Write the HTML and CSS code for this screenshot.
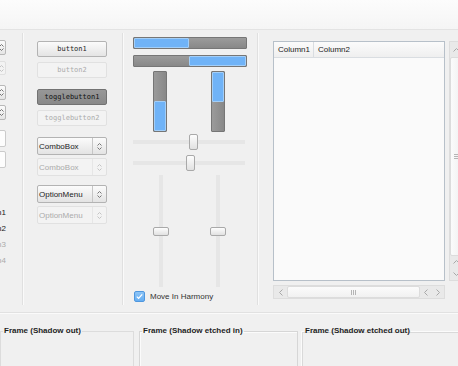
FILE: index.html
```html
<!DOCTYPE html>
<html>
<head>
<meta charset="utf-8">
<link rel="stylesheet" href="styles.css">
</head>
<body>
<div class="topbar"></div>
<div class="main">
  <div class="col col1">
    <div class="c1-inner">
      <div class="c1-spin"><svg class="ud" width="5" height="9" viewBox="0 0 5 9"><polyline points="0.5,3.5 2.5,1.5 4.5,3.5"/><polyline points="0.5,5.5 2.5,7.5 4.5,5.5"/></svg></div>
      <div class="c1-spin dis s2"><svg class="ud" width="5" height="9" viewBox="0 0 5 9"><polyline points="0.5,3.5 2.5,1.5 4.5,3.5"/><polyline points="0.5,5.5 2.5,7.5 4.5,5.5"/></svg></div>
      <div class="c1-spin s3"><svg class="ud" width="5" height="9" viewBox="0 0 5 9"><polyline points="0.5,3.5 2.5,1.5 4.5,3.5"/><polyline points="0.5,5.5 2.5,7.5 4.5,5.5"/></svg></div>
      <div class="c1-spin s4"><svg class="ud" width="5" height="9" viewBox="0 0 5 9"><polyline points="0.5,3.5 2.5,1.5 4.5,3.5"/><polyline points="0.5,5.5 2.5,7.5 4.5,5.5"/></svg></div>
      <div class="c1-entry e1"></div>
      <div class="c1-entry e2"></div>
      <div class="c1-labels">
        <div class="rl">radiobutton1</div>
        <div class="rl">radiobutton2</div>
        <div class="rl dis">radiobutton3</div>
        <div class="rl dis">radiobutton4</div>
      </div>
    </div>
  </div>

  <div class="col col2">
    <div class="btn">button1</div>
    <div class="btn dis g5">button2</div>
    <div class="btn tog g11">togglebutton1</div>
    <div class="btn dis g5">togglebutton2</div>
    <div class="combo g11"><div class="ctxt">ComboBox</div><div class="carr"><svg class="ud" width="5" height="9" viewBox="0 0 5 9"><polyline points="0.5,3.5 2.5,1.5 4.5,3.5"/><polyline points="0.5,5.5 2.5,7.5 4.5,5.5"/></svg></div></div>
    <div class="combo dis g3"><div class="ctxt">ComboBox</div><div class="carr"><svg class="ud" width="5" height="9" viewBox="0 0 5 9"><polyline points="0.5,3.5 2.5,1.5 4.5,3.5"/><polyline points="0.5,5.5 2.5,7.5 4.5,5.5"/></svg></div></div>
    <div class="combo g9"><div class="ctxt">OptionMenu</div><div class="carr"><svg class="ud" width="5" height="9" viewBox="0 0 5 9"><polyline points="0.5,3.5 2.5,1.5 4.5,3.5"/><polyline points="0.5,5.5 2.5,7.5 4.5,5.5"/></svg></div></div>
    <div class="combo dis g3"><div class="ctxt">OptionMenu</div><div class="carr"><svg class="ud" width="5" height="9" viewBox="0 0 5 9"><polyline points="0.5,3.5 2.5,1.5 4.5,3.5"/><polyline points="0.5,5.5 2.5,7.5 4.5,5.5"/></svg></div></div>
  </div>

  <div class="col col3">
    <div class="hprog"><div class="hfill" style="width:55px"></div></div>
    <div class="hprog right g6"><div class="hfill" style="width:57px"></div></div>
    <div class="vprogs">
      <div class="vprog bottom"><div class="vfill" style="height:30px"></div></div>
      <div class="vprog"><div class="vfill" style="height:30px"></div></div>
    </div>
    <div class="hscale s1"><div class="hthumb" style="margin-left:56px"></div></div>
    <div class="hscale s2"><div class="hthumb" style="margin-left:53px"></div></div>
    <div class="vscales">
      <div class="vscale"><div class="vthumb" style="margin-top:52px"></div></div>
      <div class="vscale"><div class="vthumb" style="margin-top:52px"></div></div>
    </div>
    <div class="check">
      <span class="cbox"><svg width="9" height="9" viewBox="0 0 9 9"><polyline points="1.8,4.6 3.6,6.4 7.2,2.4"/></svg></span>
      <span class="clabel">Move In Harmony</span>
    </div>
  </div>

  <div class="col col4">
    <div class="treewrap">
      <div class="tree">
        <div class="thead">
          <div class="th c1">Column1</div>
          <div class="th c2">Column2</div>
        </div>
      </div>
      <div class="hscroll">
        <div class="hbtn"><svg class="chev" width="4" height="7" viewBox="0 0 4 7"><polyline points="3.5,0.5 0.5,3.5 3.5,6.5"/></svg></div>
        <div class="hslider"><span class="grip-v"></span><span class="grip-v"></span><span class="grip-v"></span></div>
        <div class="hbtns">
          <svg class="chev" width="4" height="7" viewBox="0 0 4 7"><polyline points="3.5,0.5 0.5,3.5 3.5,6.5"/></svg>
          <svg class="chev" width="4" height="7" viewBox="0 0 4 7"><polyline points="0.5,0.5 3.5,3.5 0.5,6.5"/></svg>
        </div>
      </div>
    </div>
    <div class="vscroll">
      <div class="vbtn"><svg class="chev" width="7" height="4" viewBox="0 0 7 4"><polyline points="0.5,3.5 3.5,0.5 6.5,3.5"/></svg></div>
      <div class="vslider"><span class="grip-h"></span><span class="grip-h"></span><span class="grip-h"></span></div>
      <div class="vbtns">
        <svg class="chev" width="7" height="4" viewBox="0 0 7 4"><polyline points="0.5,3.5 3.5,0.5 6.5,3.5"/></svg>
        <svg class="chev" width="7" height="4" viewBox="0 0 7 4"><polyline points="0.5,0.5 3.5,3.5 6.5,0.5"/></svg>
      </div>
    </div>
  </div>
</div>
<div class="hsep"></div>
<div class="frames">
  <fieldset class="frame f1"><legend>Frame (Shadow out)</legend></fieldset>
  <fieldset class="frame f2 etched-in"><legend>Frame (Shadow etched in)</legend></fieldset>
  <fieldset class="frame f3 etched-out"><legend>Frame (Shadow etched out)</legend></fieldset>
</div>
</body>
</html>
```
FILE: styles.css
```css
* { box-sizing: border-box; }
html, body { margin: 0; padding: 0; }
body {
  width: 458px;
  height: 366px;
  overflow: hidden;
  background: #f0f0f0;
  font-family: "Liberation Sans", Arial, sans-serif;
  font-size: 8px;
  color: #222;
}

.topbar {
  height: 30px;
  background: linear-gradient(#fcfcfc, #f5f5f5);
  border-bottom: 1px solid #e3e3e3;
}

.main {
  display: flex;
  height: 275px;
  padding-top: 3px;
}
.col {
  flex: none;
  height: 272px;
  border-right: 1px solid #e0e0e0;
  box-shadow: 1px 0 0 #fafafa;
}
.col1 { width: 23px; overflow: hidden; }
.col2 { width: 100px; padding: 8px 0 0 14px; }
.col3 { width: 135px; padding: 4px 0 0 10px; }
.col4 { flex: 1; border-right: none; box-shadow: none; padding: 8px 0 0 15px; display: flex; gap: 4px; overflow: hidden; }

/* icons */
.ud polyline, .chev polyline {
  fill: none;
  stroke: #777;
  stroke-width: 1;
}
.dis .ud polyline { stroke: #c4c4c4; }
.chev polyline { stroke: #a8a8a8; }

/* column 1 (mostly scrolled out of view on the left) */
.c1-inner {
  width: 60px;
  margin-left: -54px;
  padding-top: 7px;
  display: flex;
  flex-direction: column;
}
.c1-spin {
  height: 15px;
  border: 1px solid #b8b8b8;
  border-radius: 2px;
  background: linear-gradient(#fbfbfb, #e5e5e5);
  display: flex;
  justify-content: flex-end;
  align-items: center;
  padding-right: 1px;
}
.c1-spin.dis { background: #f3f3f3; border-color: #e0e0e0; }
.c1-spin.s2 { margin-top: 6px; height: 14px; }
.c1-spin.s3 { margin-top: 10px; }
.c1-spin.s4 { margin-top: 5px; }
.c1-entry {
  height: 17px;
  border: 1px solid #cbcbcb;
  border-radius: 2px;
  background: #fdfdfd;
}
.c1-entry.e1 { margin-top: 10px; }
.c1-entry.e2 { margin-top: 4px; }
.c1-labels { margin-top: 37px; }
.rl {
  height: 16px;
  line-height: 16px;
  text-align: right;
  white-space: nowrap;
  color: #222;
}
.rl.dis { color: #ababab; }

/* column 2 */
.g3 { margin-top: 3px; }
.g5 { margin-top: 5px; }
.g6 { margin-top: 6px; }
.g9 { margin-top: 9px; }
.g11 { margin-top: 11px; }

.btn {
  width: 70px;
  height: 16px;
  border: 1px solid #b3b3b3;
  border-radius: 2px;
  background: linear-gradient(#fbfbfb, #e4e4e4);
  font-family: "DejaVu Sans Mono", "Liberation Mono", monospace;
  font-size: 7px;
  color: #262626;
  display: flex;
  align-items: center;
  justify-content: center;
}
.btn.dis {
  background: #f3f3f3;
  border-color: #e1e1e1;
  color: #ababab;
}
.btn.tog {
  background: linear-gradient(#979797, #898989);
  border-color: #727272;
  color: #111;
}

.combo {
  width: 70px;
  height: 18px;
  display: flex;
  border: 1px solid #b3b3b3;
  border-radius: 2px;
  background: linear-gradient(#fbfbfb, #e3e3e3);
}
.ctxt {
  flex: 1;
  padding-left: 1px;
  display: flex;
  align-items: center;
  border-right: 1px solid #c6c6c6;
  color: #1c1c1c;
}
.carr {
  width: 13px;
  display: flex;
  align-items: center;
  justify-content: center;
}
.combo.dis {
  background: #f3f3f3;
  border-color: #e1e1e1;
}
.combo.dis .ctxt { color: #ababab; border-right-color: #e6e6e6; }

/* column 3 */
.hprog {
  width: 114px;
  height: 12px;
  border: 1px solid #767676;
  border-radius: 1px;
  background: linear-gradient(#9b9b9b, #888888);
  display: flex;
}
.hprog.right { justify-content: flex-end; }
.hfill, .vfill {
  background: #70b3f7;
  border: 1px solid #a2cef8;
  border-radius: 1px;
}
.vprogs {
  margin-top: 4px;
  height: 61px;
  padding-left: 20px;
  display: flex;
  gap: 44px;
}
.vprog {
  width: 14px;
  height: 61px;
  border: 1px solid #767676;
  border-radius: 1px;
  background: linear-gradient(90deg, #9b9b9b, #888888);
  display: flex;
  flex-direction: column;
}
.vprog.bottom { justify-content: flex-end; }
.hscale {
  height: 16px;
  width: 112px;
  display: flex;
  align-items: flex-start;
  background: linear-gradient(#e6e6e6, #e6e6e6) no-repeat 0 6px / 112px 4px;
}
.hscale.s1 { margin-top: 2px; }
.hscale.s2 { margin-top: 5px; }
.hthumb {
  width: 9px;
  height: 16px;
  border: 1px solid #a9a9a9;
  border-radius: 2px;
  background: linear-gradient(#fdfdfd, #e1e1e1);
}
.vscales {
  margin-top: 4px;
  height: 112px;
  padding-left: 20px;
  display: flex;
  gap: 41px;
}
.vscale {
  width: 16px;
  height: 112px;
  background: linear-gradient(#e6e6e6, #e6e6e6) no-repeat 6px 0 / 4px 112px;
}
.vthumb {
  width: 16px;
  height: 9px;
  border: 1px solid #a9a9a9;
  border-radius: 2px;
  background: linear-gradient(#fdfdfd, #e1e1e1);
}
.check {
  margin-top: 4px;
  margin-left: 1px;
  display: flex;
  align-items: center;
  gap: 5px;
  height: 11px;
}
.cbox {
  width: 11px;
  height: 11px;
  border: 1px solid #4f97de;
  border-radius: 2px;
  background: linear-gradient(#8cc4f6, #66aef2);
  display: flex;
  align-items: center;
  justify-content: center;
}
.cbox polyline { fill: none; stroke: #fff; stroke-width: 1.3; }
.clabel { color: #333; }

/* column 4 */
.treewrap {
  width: 172px;
  flex: none;
  display: flex;
  flex-direction: column;
  gap: 4px;
}
.tree {
  height: 240px;
  border: 1px solid #b7c0c9;
  background: #fafafa;
}
.thead {
  height: 16px;
  display: flex;
  border-bottom: 1px solid #d9dde1;
  background: linear-gradient(#fbfbfb, #efefef);
}
.th {
  display: flex;
  align-items: center;
  padding-left: 4px;
  color: #222;
}
.th.c1 { width: 40px; border-right: 1px solid #d9dde1; }
.th.c2 { flex: 1; }

.hscroll {
  height: 14px;
  border: 1px solid #dddddd;
  background: #e9e9e9;
  display: flex;
}
.hbtn {
  width: 13px;
  display: flex;
  align-items: center;
  justify-content: center;
}
.hslider {
  width: 133px;
  border: 1px solid #dcdcdc;
  border-radius: 2px;
  background: linear-gradient(#fbfbfb, #f1f1f1);
  display: flex;
  align-items: center;
  justify-content: center;
  gap: 1px;
}
.grip-v { width: 1px; height: 5px; background: #b5b5b5; }
.hbtns {
  flex: 1;
  display: flex;
  align-items: center;
  justify-content: center;
  gap: 8px;
}

.vscroll {
  width: 14px;
  flex: none;
  height: 240px;
  border: 1px solid #dddddd;
  background: #e9e9e9;
  display: flex;
  flex-direction: column;
}
.vbtn {
  height: 15px;
  display: flex;
  align-items: center;
  justify-content: center;
}
.vslider {
  height: 199px;
  border: 1px solid #dcdcdc;
  border-radius: 2px;
  background: linear-gradient(90deg, #fbfbfb, #f1f1f1);
  display: flex;
  flex-direction: column;
  align-items: center;
  justify-content: center;
  gap: 1px;
}
.grip-h { width: 5px; height: 1px; background: #b5b5b5; }
.vbtns {
  flex: 1;
  display: flex;
  flex-direction: column;
  align-items: center;
  justify-content: center;
  gap: 8px;
}

/* bottom */
.hsep {
  height: 1px;
  margin-top: 7px;
  background: #e1e1e1;
  box-shadow: 0 1px 0 #fafafa;
}
.frames {
  display: flex;
  padding-top: 13px;
  height: 53px;
  overflow: hidden;
}
.frame {
  margin: 0;
  padding: 0;
  min-width: 0;
  height: 44px;
  border: 1px solid #dcdcdc;
  flex: none;
}
.frame legend {
  padding: 0 1px;
  margin-left: 2px;
  font-weight: bold;
  font-size: 8px;
  line-height: 10px;
  color: #1e1e1e;
}
.f1 { width: 134px; }
.f2 { width: 159px; margin-left: 5px; }
.f3 { width: 170px; margin-left: 3px; }
.etched-in { border-color: #d6d6d6; box-shadow: inset 1px 1px 0 #fbfbfb; }
.etched-out { border-color: #fbfbfb; box-shadow: inset 1px 1px 0 #d9d9d9; }
```
